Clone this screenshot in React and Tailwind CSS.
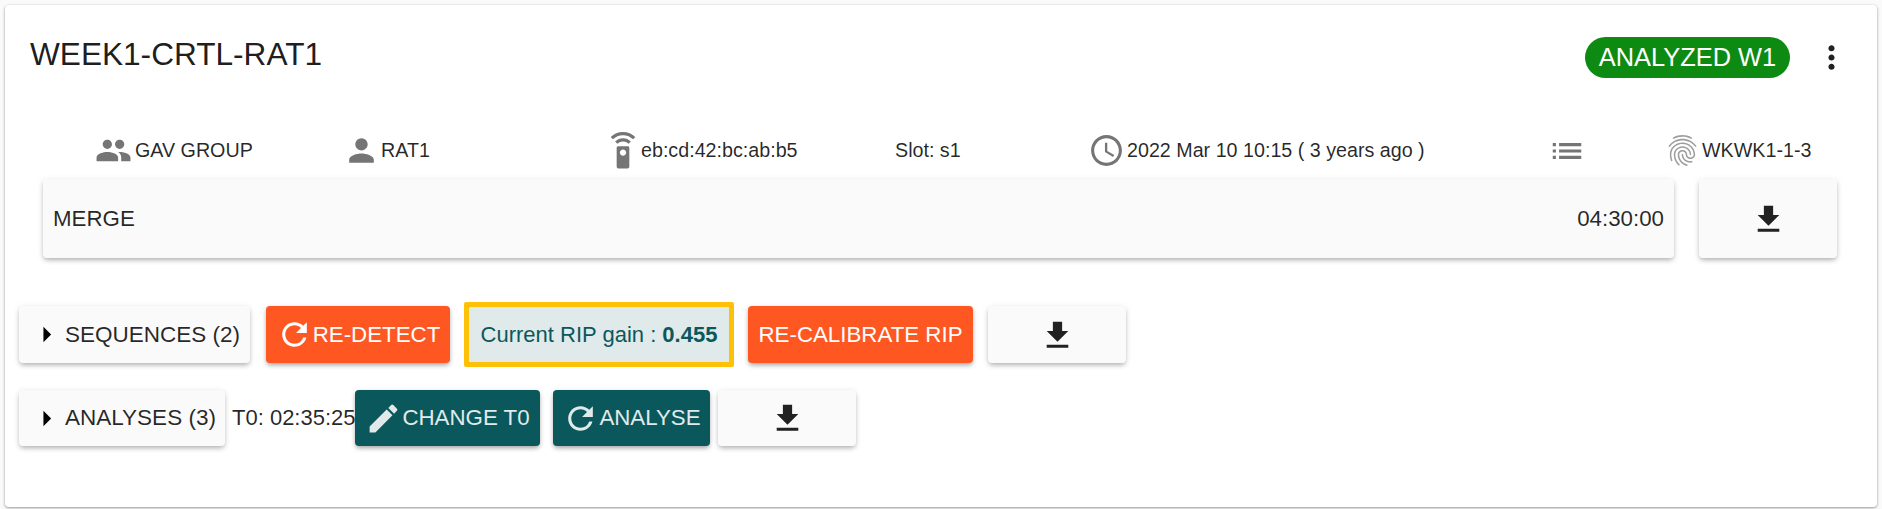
import {
  MdAccessTime,
  MdArrowRight,
  MdEdit,
  MdFileDownload,
  MdFingerprint,
  MdList,
  MdMoreVert,
  MdPeople,
  MdPerson,
  MdRefresh,
  MdSettingsRemote,
} from "react-icons/md";

const FONT = "font-['Liberation_Sans',Arial,sans-serif]";

function InfoCell({ width, icon, text, textClass = "" }) {
  return (
    <div className={`flex h-[37px] items-center shrink-0 ${width}`}>
      {icon}
      {text && <span className={`text-[19.7px] text-black/85 ${textClass}`}>{text}</span>}
    </div>
  );
}

function Panel({ width, children }) {
  return (
    <div
      className={`flex items-center bg-[#fafafa] rounded-[4px] shadow-[0_3px_5px_-1px_rgba(0,0,0,0.25),0_1px_6px_rgba(0,0,0,0.1)] shrink-0 ${width}`}
    >
      {children}
    </div>
  );
}

function DownloadButton({ height, iconClass = "" }) {
  return (
    <Panel width={`w-[138px] justify-center ${height}`}>
      <MdFileDownload size={37} className={`text-[#212121] ${iconClass}`} />
    </Panel>
  );
}

function Expander({ width, label }) {
  return (
    <Panel width={`${width} h-full pl-[9px]`}>
      <MdArrowRight size={37} className="text-black shrink-0" />
      <span className="text-[22.5px] text-black/85 whitespace-nowrap">{label}</span>
    </Panel>
  );
}

function ActionButton({ width, color, icon, label }) {
  return (
    <button
      className={`flex items-center justify-center h-full rounded-[4px] shrink-0 shadow-[0_3px_5px_-1px_rgba(0,0,0,0.3),0_1px_5px_rgba(0,0,0,0.12)] text-[22.3px] whitespace-nowrap ${width} ${color}`}
    >
      {icon}
      {label}
    </button>
  );
}

export default function App() {
  return (
    <div className={`h-[509px] bg-[#fafafa] p-[5px] pb-[2px] overflow-hidden ${FONT}`}>
      <div className="h-full bg-white rounded-[4px] shadow-[0_1px_3px_rgba(0,0,0,0.4)] pt-[32px]">
        <div className="flex items-center h-[41px] pl-[25px]">
          <h1 className="text-[31.6px] font-normal text-black/90 flex-1 -translate-y-[3px]">WEEK1-CRTL-RAT1</h1>
          <div className="flex items-center justify-center w-[205px] h-[41px] rounded-full bg-[#0d8a12] text-white text-[25.4px]">
            ANALYZED W1
          </div>
          <MdMoreVert size={37} className="text-[#212121] ml-[23px] mr-[27px]" />
        </div>

        <div className="flex mt-[54px] pl-[90px]">
          <InfoCell width="w-[248px]" icon={<MdPeople size={37} className="text-[#757575] mr-[3px]" />} text="GAV GROUP" />
          <InfoCell width="w-[261px]" icon={<MdPerson size={37} className="text-[#757575]" />} text="RAT1" textClass="ml-[1px]" />
          <InfoCell width="w-[291px]" icon={<MdSettingsRemote size={38} className="text-[#757575]" />} text="eb:cd:42:bc:ab:b5" textClass="-ml-[1px]" />
          <InfoCell width="w-[193px]" text="Slot: s1" />
          <InfoCell width="w-[460px]" icon={<MdAccessTime size={37} className="text-[#757575] mr-[2px]" />} text="2022 Mar 10 10:15 ( 3 years ago )" />
          <InfoCell width="w-[116px]" icon={<MdList size={38} className="text-[#757575]" />} />
          <InfoCell width="w-[180px]" icon={<MdFingerprint size={37} className="text-[#9e9e9e] mr-[1px]" />} text="WKWK1-1-3" />
        </div>

        <div className="flex mt-[10px] pl-[38px] gap-[25px]">
          <Panel width="w-[1631px] h-[79px] justify-between px-[10px]">
            <span className="text-[22.3px] text-black/85">MERGE</span>
            <span className="text-[22.3px] text-black/85">04:30:00</span>
          </Panel>
          <DownloadButton height="h-[79px]" iconClass="translate-y-[1px]" />
        </div>

        <div className="flex items-center h-[65px] mt-[44px] pl-[14px]">
          <div className="h-[57px] flex gap-[16px]">
            <Expander width="w-[231px]" label="SEQUENCES (2)" />
            <ActionButton
              width="w-[184px]"
              color="bg-[#ff5722] text-white"
              icon={<MdRefresh size={37} className="shrink-0" />}
              label="RE-DETECT"
            />
          </div>
          <div className="flex items-center justify-center w-[270px] h-[65px] ml-[14px] rounded-[2px] border-[5px] border-[#ffc107] bg-[#e0eaea] text-[#0b585c] text-[22px] whitespace-nowrap">
            Current RIP gain :&nbsp;<b>0.455</b>
          </div>
          <div className="h-[57px] flex ml-[14px] gap-[15px]">
            <ActionButton width="w-[225px]" color="bg-[#ff5722] text-white" label="RE-CALIBRATE RIP" />
            <DownloadButton height="h-full" iconClass="translate-y-[1px]" />
          </div>
        </div>

        <div className="flex items-center h-[56px] mt-[23px] pl-[14px]">
          <Expander width="w-[206px]" label="ANALYSES (3)" />
          <span className="ml-[7px] w-[123px] text-[22px] text-black/85 whitespace-nowrap -translate-y-[1px]">T0: 02:35:25</span>
          <ActionButton
            width="w-[185px]"
            color="bg-[#0b585c] text-[#e0eaea]"
            icon={<MdEdit size={37} className="shrink-0" />}
            label="CHANGE T0"
          />
          <div className="w-[13px] shrink-0" />
          <ActionButton
            width="w-[157px]"
            color="bg-[#0b585c] text-[#e0eaea]"
            icon={<MdRefresh size={37} className="shrink-0" />}
            label="ANALYSE"
          />
          <div className="ml-[8px] h-full">
            <DownloadButton height="h-full" />
          </div>
        </div>
      </div>
    </div>
  );
}
